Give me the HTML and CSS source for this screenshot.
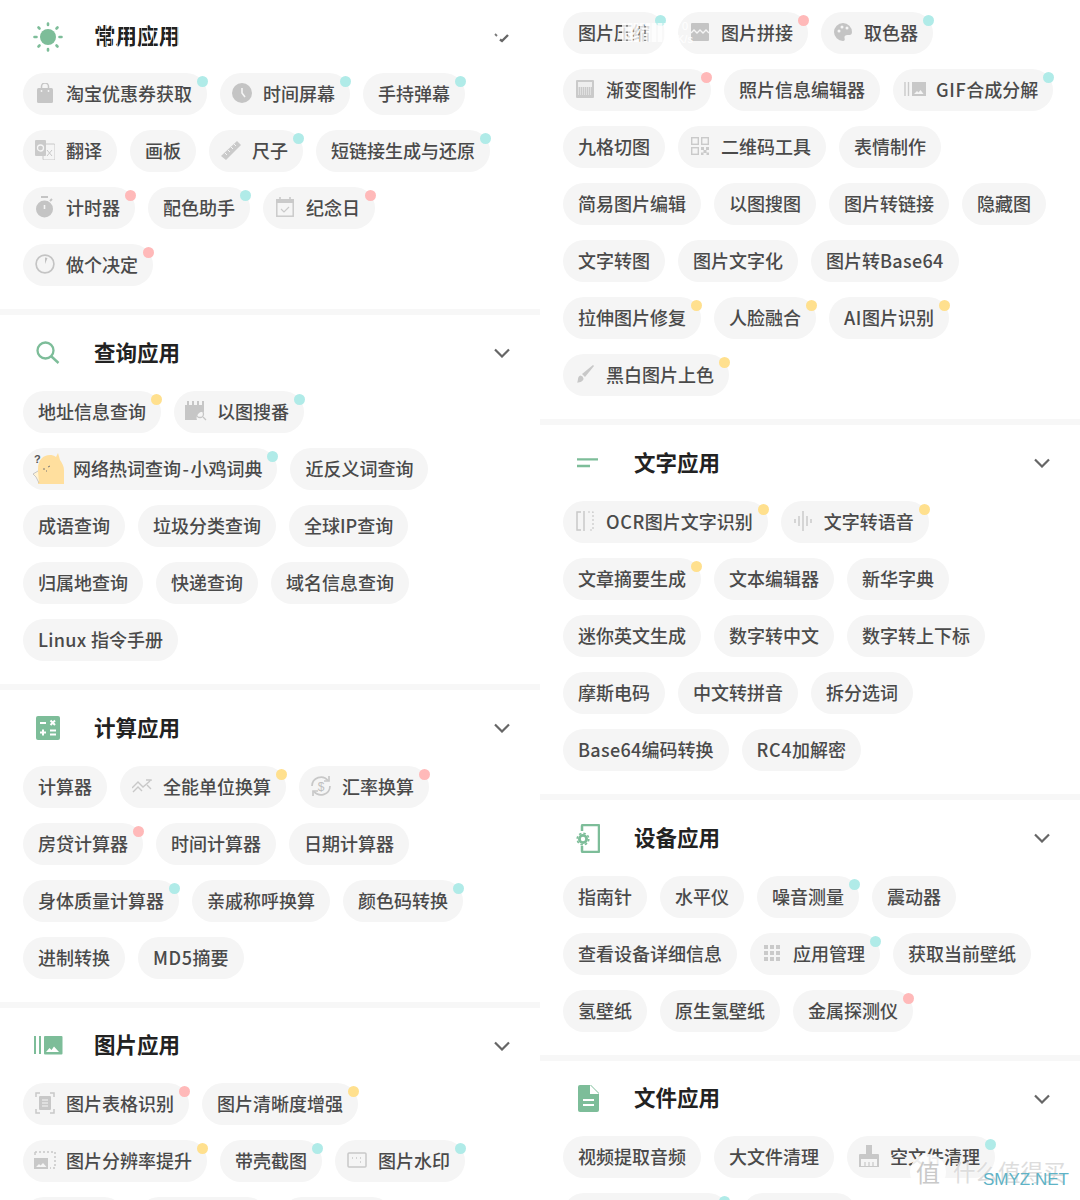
FILE: index.html
```html
<!DOCTYPE html>
<html lang="zh-CN">
<head>
    <meta charset="UTF-8">
    <meta name="viewport" content="width=device-width, initial-scale=1.0">
    <link rel="stylesheet" href="styles.css">
    <title>工具箱</title>
</head>
<body>
<div class="page">
    <!-- left column -->
    <div class="column">
        <section class="group group-first">
            <div class="group-head">
                <span class="head-icon">
                    <svg width="32" height="32" viewBox="0 0 32 32"><circle cx="16" cy="16" r="8" fill="#7dbd99"/><g stroke="#7dbd99" stroke-width="2.600" stroke-linecap="round"><path d="M16 2.500v1.500M16 28v1.500M2.500 16h2M27.500 16h2M6.500 6.500l1 1M24.500 24.500l1 1M25.500 6.500l-1 1M7.500 24.500l-1 1"/></g></svg>
                </span>
                <h2 class="head-title">常用应用</h2>
                <span class="head-noise"></span>
                <span class="head-arrow">
                    <svg width="16" height="12" viewBox="0 0 16 12"><path d="M1 3l2 2" fill="none" stroke="#777" stroke-width="1.800"/><path d="M6 8.500L8 10l6-6" fill="none" stroke="#666" stroke-width="2.400"/></svg>
                </span>
            </div>
            <div class="chips">
                <span class="chip has-icon"><span class="icon"><svg width="16" height="20" viewBox="0 0 16 20"><path d="M4.500 6V3.500a3.500 3.500 0 017 0V6" fill="none" stroke="#c6c6c6" stroke-width="1.500"/><rect x="0" y="5" width="16" height="15" rx="1.500" fill="#c6c6c6"/><circle cx="4.500" cy="8" r=".9" fill="#f5f5f5"/><circle cx="11.500" cy="8" r=".9" fill="#f5f5f5"/></svg></span>淘宝优惠券获取<i class="dot teal"></i></span>
                <span class="chip has-icon"><span class="icon"><svg width="20" height="20" viewBox="0 0 20 20"><circle cx="10" cy="10" r="10" fill="#c4c4c4"/><path d="M10 5v5l3 4" fill="none" stroke="#f5f5f5" stroke-width="1.600"/></svg></span>时间屏幕<i class="dot teal"></i></span>
                <span class="chip">手持弹幕<i class="dot teal"></i></span>
                <span class="chip has-icon"><span class="icon"><svg width="20" height="20" viewBox="0 0 20 20"><rect x="8" y="4" width="12" height="16" rx="1" fill="#f5f5f5" stroke="#c8c8c8"/><rect x="0" y="0" width="11" height="16" rx="1" fill="#cacaca"/><circle cx="5.500" cy="8" r="3" fill="none" stroke="#f5f5f5" stroke-width="1.300"/><path d="M12 10l5 6M17 10l-5 6" stroke="#c8c8c8"/></svg></span>翻译</span>
                <span class="chip">画板</span>
                <span class="chip has-icon"><span class="icon"><svg width="22" height="22" viewBox="0 0 22 22"><path d="M1 17L17 2l4 4L6 21z" fill="#cacaca"/><path d="M5 14l2 2M8 11l2 2M11 8l2 2M14 5l2 2" stroke="#f5f5f5" stroke-width="1"/></svg></span>尺子<i class="dot teal"></i></span>
                <span class="chip">短链接生成与还原<i class="dot teal"></i></span>
                <span class="chip has-icon"><span class="icon"><svg width="20" height="22" viewBox="0 0 20 22"><circle cx="9.500" cy="13" r="8.500" fill="#c4c4c4"/><rect x="6" y="0" width="7" height="2" fill="#c4c4c4"/><path d="M15 5l2-2" stroke="#c4c4c4" stroke-width="2"/><path d="M9.500 9v4" stroke="#f5f5f5" stroke-width="1.600"/></svg></span>计时器<i class="dot pink"></i></span>
                <span class="chip">配色助手<i class="dot teal"></i></span>
                <span class="chip has-icon"><span class="icon"><svg width="18" height="20" viewBox="0 0 18 20"><rect x=".8" y="2.800" width="16.400" height="16.400" fill="none" stroke="#cacaca" stroke-width="1.500"/><rect x="0" y="2" width="18" height="4" fill="#cacaca"/><path d="M4 0v3M14 0v3" stroke="#cacaca" stroke-width="1.600"/><path d="M5 12l3 3 5-5" fill="none" stroke="#cacaca" stroke-width="1.200"/></svg></span>纪念日<i class="dot pink"></i></span>
                <span class="chip has-icon"><span class="icon"><svg width="20" height="20" viewBox="0 0 20 20"><circle cx="10" cy="10" r="8.900" fill="none" stroke="#c4c4c4" stroke-width="1.700"/><path d="M10 3.500V10l2.500-6z" fill="#c0c0c0"/></svg></span>做个决定<i class="dot pink"></i></span>
            </div>
        </section>

        <section class="group">
            <div class="group-head">
                <span class="head-icon">
                    <svg width="26" height="26" viewBox="0 0 26 26"><circle cx="10.500" cy="10.500" r="8" fill="none" stroke="#7dbd99" stroke-width="2.300"/><path d="M16.500 16.500l7 6.500" stroke="#7dbd99" stroke-width="2.400"/></svg>
                </span>
                <h2 class="head-title">查询应用</h2>
                <span class="head-arrow"><svg width="16" height="10" viewBox="0 0 16 10"><path d="M1 1.500l7 7 7-7" fill="none" stroke="#666" stroke-width="2.200"/></svg></span>
            </div>
            <div class="chips">
                <span class="chip">地址信息查询<i class="dot yellow"></i></span>
                <span class="chip has-icon"><span class="icon"><svg width="22" height="20" viewBox="0 0 22 20"><path d="M0 4h19v7a6 6 0 00-7 8H0z" fill="#c6c6c6"/><path d="M3 0v4M8 0v4M13 0v4M18 0v4" stroke="#c6c6c6" stroke-width="2"/><circle cx="15" cy="13" r="3.500" fill="none" stroke="#c6c6c6" stroke-width="1.300"/><path d="M18 16l3 3" stroke="#c6c6c6" stroke-width="1.300"/></svg></span>以图搜番<i class="dot teal"></i></span>
                <span class="chip has-icon has-pic"><span class="icon"><svg width="31" height="32" viewBox="0 0 31 32"><path d="M5 32V17C5 8 10 3 17 3c2 0 4 .5 6 2l2-4 2 7c2 3 4 6 4 10v14z" fill="#ffdf9e"/><path d="M5 19L0 22l3 3 3 6" fill="#fff3d6" stroke="#bbb" stroke-width=".8"/><path d="M10 17h2M15 15l2-1M13 19h1" stroke="#777" stroke-width="1"/><text x="1" y="11" class="pic-mark">?</text></svg></span>网络热词查询<span class="wide-dash">-</span>小鸡词典<i class="dot teal"></i></span>
                <span class="chip">近反义词查询</span>
                <span class="chip">成语查询</span>
                <span class="chip">垃圾分类查询</span>
                <span class="chip">全球IP查询</span>
                <span class="chip">归属地查询</span>
                <span class="chip">快递查询</span>
                <span class="chip">域名信息查询</span>
                <span class="chip"><span class="latin-long">Linux&nbsp;</span>指令手册</span>
            </div>
        </section>

        <section class="group">
            <div class="group-head">
                <span class="head-icon">
                    <svg width="24" height="24" viewBox="0 0 24 24"><rect width="24" height="24" rx="2" fill="#7dbd99"/><g stroke="#fff" stroke-width="2"><path d="M4 7h6M14.500 4.500l4.500 4.500M19 4.500L14.500 9M4 16.500h6M7 13.500v6M14 14.500h6M14 18.500h6"/></g></svg>
                </span>
                <h2 class="head-title">计算应用</h2>
                <span class="head-arrow"><svg width="16" height="10" viewBox="0 0 16 10"><path d="M1 1.500l7 7 7-7" fill="none" stroke="#666" stroke-width="2.200"/></svg></span>
            </div>
            <div class="chips">
                <span class="chip">计算器</span>
                <span class="chip has-icon"><span class="icon"><svg width="20" height="14" viewBox="0 0 20 14"><path d="M0 9l6-6 5 5 7-6M14 1h5v1M1 13l5-5 4 4M15 6l4 4" fill="none" stroke="#c8c8c8" stroke-width="1.400"/></svg></span>全能单位换算<i class="dot yellow"></i></span>
                <span class="chip has-icon"><span class="icon"><svg width="22" height="22" viewBox="0 0 22 22"><path d="M2 11a9 9 0 0116-5.500M20 11a9 9 0 01-16 5.500" fill="none" stroke="#c8c8c8" stroke-width="1.700"/><path d="M19 1v5h-5M3 21v-5h5" fill="none" stroke="#c8c8c8" stroke-width="1.700"/><text x="11" y="15.500" class="pic-money">$</text></svg></span>汇率换算<i class="dot pink"></i></span>
                <span class="chip">房贷计算器<i class="dot pink"></i></span>
                <span class="chip">时间计算器</span>
                <span class="chip">日期计算器</span>
                <span class="chip">身体质量计算器<i class="dot teal"></i></span>
                <span class="chip">亲戚称呼换算</span>
                <span class="chip">颜色码转换<i class="dot teal"></i></span>
                <span class="chip">进制转换</span>
                <span class="chip"><span class="latin">MD5</span>摘要</span>
            </div>
        </section>

        <section class="group">
            <div class="group-head">
                <span class="head-icon">
                    <svg width="29" height="19" viewBox="0 0 29 19"><path d="M1 0v18M6 0v18" stroke="#7dbd99" stroke-width="2"/><rect x="10" y="0" width="18.500" height="18.500" rx="1" fill="#7dbd99"/><path d="M12 16l3.500-4 2 2 2.500-3.500 5 5.500z" fill="#fff"/></svg>
                </span>
                <h2 class="head-title">图片应用</h2>
                <span class="head-arrow"><svg width="16" height="10" viewBox="0 0 16 10"><path d="M1 1.500l7 7 7-7" fill="none" stroke="#666" stroke-width="2.200"/></svg></span>
            </div>
            <div class="chips">
                <span class="chip has-icon"><span class="icon"><svg width="20" height="22" viewBox="0 0 20 22"><path d="M1 5V1h4M15 1h4v4M19 17v4h-4M5 21H1v-4" fill="none" stroke="#c8c8c8" stroke-width="1.500"/><rect x="4" y="4" width="12" height="14" rx="1" fill="#c8c8c8"/><path d="M7 8h6M7 11h6M7 14h6" stroke="#f5f5f5" stroke-width="1.200"/></svg></span>图片表格识别<i class="dot pink"></i></span>
                <span class="chip">图片清晰度增强<i class="dot yellow"></i></span>
                <span class="chip has-icon"><span class="icon"><svg width="22" height="18" viewBox="0 0 22 18"><path d="M1 1h20v16h-5" fill="none" stroke="#c8c8c8" stroke-width="1.500" stroke-dasharray="2 2"/><path d="M1 1v3" stroke="#c8c8c8" stroke-width="1.500"/><path d="M0 7h14v11H0z" fill="#c8c8c8"/><path d="M2 16l3-3 1.500 1.500L9 12l3.500 4z" fill="#f5f5f5"/></svg></span>图片分辨率提升<i class="dot yellow"></i></span>
                <span class="chip">带壳截图<i class="dot teal"></i></span>
                <span class="chip has-icon"><span class="icon"><svg width="20" height="16" viewBox="0 0 20 16"><rect x="1" y="1" width="18" height="14" rx="1" fill="none" stroke="#c8c8c8" stroke-width="1.500"/><path d="M5 6h1M9 6h1M13 6h1M13 10h1" stroke="#c8c8c8" stroke-width="1.500"/></svg></span>图片水印<i class="dot teal"></i></span>
                <!-- next row is cut by the picture edge, only the pill tops show -->
                <span class="chip cut-a"><i class="dot teal"></i></span>
                <span class="chip cut-b"><i class="dot pink"></i></span>
                <span class="chip cut-c"><i class="dot teal"></i></span>
            </div>
        </section>
    </div>

    <!-- right column -->
    <div class="column column-right">
        <section class="group group-cont">
            <div class="chips">
                <span class="chip">图片压缩<i class="dot teal"></i></span>
                <span class="chip has-icon"><span class="icon"><svg width="18" height="18" viewBox="0 0 18 18"><rect width="18" height="18" rx="1" fill="#c4c4c4"/><path d="M0 10l3-3 3 3 3-3 3 3 3-3 3 3" fill="none" stroke="#f5f5f5" stroke-width="1.400"/></svg></span>图片拼接<i class="dot pink"></i></span>
                <span class="chip has-icon"><span class="icon"><svg width="18" height="18" viewBox="0 0 18 18"><path d="M9 0a9 9 0 100 18c2 0 2-1.500 1.500-3-.5-2 1-3 3-3h2c1.500 0 2.500-1 2.500-3a9 9 0 00-9-9z" fill="#c4c4c4"/><circle cx="5" cy="8" r="1.500" fill="#f5f5f5"/><circle cx="8" cy="4" r="1.500" fill="#f5f5f5"/><circle cx="13" cy="5" r="1.500" fill="#f5f5f5"/></svg></span>取色器<i class="dot teal"></i></span>
                <span class="chip has-icon"><span class="icon"><svg width="18" height="18" viewBox="0 0 18 18"><rect width="18" height="18" rx="1" fill="#cacaca"/><rect x="2" y="2" width="14" height="5" fill="#eee"/><path d="M2 8h14M2 10h14M2 12h14M2 14h14" stroke="#f5f5f5" stroke-width="1" stroke-dasharray="1 1"/></svg></span>渐变图制作<i class="dot pink"></i></span>
                <span class="chip">照片信息编辑器</span>
                <span class="chip has-icon"><span class="icon"><svg width="22" height="14" viewBox="0 0 22 14"><path d="M1 0v14M4.500 0v14" stroke="#cacaca" stroke-width="1.400"/><rect x="8" y="0" width="14" height="14" fill="#c8c8c8"/><path d="M10 12l3-3 1.500 1.500 2-2.500 3 4z" fill="#f5f5f5"/></svg></span><span class="latin">GIF</span>合成分解<i class="dot teal"></i></span>
                <span class="chip">九格切图</span>
                <span class="chip has-icon"><span class="icon"><svg width="18" height="18" viewBox="0 0 18 18"><g fill="none" stroke="#cacaca" stroke-width="1.400"><rect x=".7" y=".7" width="6.600" height="6.600"/><rect x="10.700" y=".7" width="6.600" height="6.600"/><rect x=".7" y="10.700" width="6.600" height="6.600"/></g><path d="M10 10h3v3h-3zM15 10h3v3h-3zM12.500 13h3v3h-3zM10 15.500h2.500V18H10zM15.500 15.500H18V18h-2.500z" fill="#cacaca"/></svg></span>二维码工具</span>
                <span class="chip">表情制作</span>
                <span class="chip">简易图片编辑</span>
                <span class="chip">以图搜图</span>
                <span class="chip">图片转链接</span>
                <span class="chip">隐藏图</span>
                <span class="chip">文字转图</span>
                <span class="chip">图片文字化</span>
                <span class="chip">图片转<span class="latin-long">Base64</span></span>
                <span class="chip">拉伸图片修复<i class="dot yellow"></i></span>
                <span class="chip">人脸融合<i class="dot yellow"></i></span>
                <span class="chip"><span class="latin">AI</span>图片识别<i class="dot yellow"></i></span>
                <span class="chip has-icon"><span class="icon"><svg width="18" height="18" viewBox="0 0 18 18"><path d="M17 0l1 1L9 12l-3-3z" fill="#c8c8c8"/><path d="M4.500 10.500a3.500 3.500 0 013 3c0 2.500-3 4-6.500 4 1.500-1.500 0-6 3.500-7z" fill="#c8c8c8"/></svg></span>黑白图片上色<i class="dot yellow"></i></span>
            </div>
        </section>

        <section class="group">
            <div class="group-head">
                <span class="head-icon">
                    <svg width="22" height="10" viewBox="0 0 22 10"><path d="M0 1.300h21M0 8h13" stroke="#7dbd99" stroke-width="2.300"/></svg>
                </span>
                <h2 class="head-title">文字应用</h2>
                <span class="head-arrow"><svg width="16" height="10" viewBox="0 0 16 10"><path d="M1 1.500l7 7 7-7" fill="none" stroke="#666" stroke-width="2.200"/></svg></span>
            </div>
            <div class="chips">
                <span class="chip has-icon"><span class="icon"><svg width="18" height="20" viewBox="0 0 18 20"><path d="M5 1H1v18h4" fill="none" stroke="#c8c8c8" stroke-width="1.500"/><path d="M8 0v20" stroke="#c8c8c8" stroke-width="1.500"/><path d="M12 1h5v18h-5" fill="none" stroke="#c8c8c8" stroke-width="1.200" stroke-dasharray="2 2"/></svg></span><span class="latin">OCR</span>图片文字识别<i class="dot yellow"></i></span>
                <span class="chip has-icon"><span class="icon"><svg width="18" height="20" viewBox="0 0 18 20"><path d="M1 8v4M5 5v10M9 0v20M13 5v10M17 8v4" stroke="#c8c8c8" stroke-width="1.400"/></svg></span>文字转语音<i class="dot yellow"></i></span>
                <span class="chip">文章摘要生成<i class="dot yellow"></i></span>
                <span class="chip">文本编辑器</span>
                <span class="chip">新华字典</span>
                <span class="chip">迷你英文生成</span>
                <span class="chip">数字转中文</span>
                <span class="chip">数字转上下标</span>
                <span class="chip">摩斯电码</span>
                <span class="chip">中文转拼音</span>
                <span class="chip">拆分选词</span>
                <span class="chip"><span class="latin-long">Base64</span>编码转换</span>
                <span class="chip"><span class="latin">RC4</span>加解密</span>
            </div>
        </section>

        <section class="group">
            <div class="group-head">
                <span class="head-icon">
                    <svg width="24" height="29" viewBox="0 0 24 29"><path d="M6 7V2a1 1 0 011-1h15a1 1 0 011 1v25a1 1 0 01-1 1H7a1 1 0 01-1-1v-5" fill="none" stroke="#7dbd99" stroke-width="2.500"/><circle cx="7" cy="15" r="3.600" fill="none" stroke="#7dbd99" stroke-width="2.800"/><circle cx="7" cy="15" r="5.800" fill="none" stroke="#7dbd99" stroke-width="1.600" stroke-dasharray="2.500 2"/></svg>
                </span>
                <h2 class="head-title">设备应用</h2>
                <span class="head-arrow"><svg width="16" height="10" viewBox="0 0 16 10"><path d="M1 1.500l7 7 7-7" fill="none" stroke="#666" stroke-width="2.200"/></svg></span>
            </div>
            <div class="chips">
                <span class="chip">指南针</span>
                <span class="chip">水平仪</span>
                <span class="chip">噪音测量<i class="dot teal"></i></span>
                <span class="chip">震动器</span>
                <span class="chip">查看设备详细信息</span>
                <span class="chip has-icon"><span class="icon"><svg width="16" height="16" viewBox="0 0 16 16"><path d="M0 0h4v4H0zM6 0h4v4H6zM12 0h4v4h-4zM0 6h4v4H0zM6 6h4v4H6zM12 6h4v4h-4zM0 12h4v4H0zM6 12h4v4H6zM12 12h4v4h-4z" fill="#cacaca"/></svg></span>应用管理<i class="dot teal"></i></span>
                <span class="chip">获取当前壁纸</span>
                <span class="chip">氢壁纸</span>
                <span class="chip">原生氢壁纸</span>
                <span class="chip">金属探测仪<i class="dot pink"></i></span>
            </div>
        </section>

        <section class="group">
            <div class="group-head">
                <span class="head-icon">
                    <svg width="21" height="27" viewBox="0 0 21 27"><path d="M2 0h11l8 8v17a2 2 0 01-2 2H2a2 2 0 01-2-2V2a2 2 0 012-2z" fill="#7dbd99"/><path d="M12 0v9h9z" fill="#fff"/><path d="M5 15h11M5 20h11" stroke="#fff" stroke-width="2.200"/></svg>
                </span>
                <h2 class="head-title">文件应用</h2>
                <span class="head-arrow"><svg width="16" height="10" viewBox="0 0 16 10"><path d="M1 1.500l7 7 7-7" fill="none" stroke="#666" stroke-width="2.200"/></svg></span>
            </div>
            <div class="chips">
                <span class="chip">视频提取音频</span>
                <span class="chip">大文件清理</span>
                <span class="chip has-icon"><span class="icon"><svg width="20" height="22" viewBox="0 0 20 22"><path d="M7 0h6v9h6a1 1 0 011 1v12H0V10a1 1 0 011-1h6z" fill="#c8c8c8"/><rect x="2" y="14" width="16" height="7" fill="#f5f5f5"/><path d="M6 21v-4M10 21v-4M14 21v-4" stroke="#c8c8c8" stroke-width="1.200"/></svg></span>空文件清理<i class="dot teal"></i></span>
                <span class="chip cut-d"><i class="dot teal"></i></span>
                <span class="chip cut-e"></span>
            </div>
        </section>
    </div>

    <!-- leftovers of the capture sitting on top of the page -->
    <div class="smudge"></div>
    <div class="netspeed">0<br>K/s</div>
    <div class="mark">
        <span class="mark-badge">值</span>
        <span class="mark-name">什么值得买</span>
        <span class="mark-site">SMYZ.NET</span>
    </div>
</div>
</body>
</html>
```

FILE: styles.css
```css
body {
    margin: 0;
    background-color: #fff;
    font-family: "Noto Sans CJK SC", "Noto Sans", sans-serif;
}

.page {
    position: relative;
    display: flex;
    width: 1080px;
    height: 1200px;
    overflow: hidden;
}

.column {
    width: 540px;
    flex-shrink: 0;
}

.group {
    padding-bottom: 23px;
    border-bottom: 6px solid #f7f7f7;
}

.group:last-child {
    border-bottom: none;
}

.group-first .group-head {
    height: 73px;
}

.group:last-child .group-head {
    height: 75px;
}

.group-cont {
    padding-top: 12px;
}

.group-head {
    position: relative;
    display: flex;
    align-items: center;
    height: 76px;
    padding-left: 28px;
    padding-right: 30px;
}

.head-icon {
    display: flex;
    align-items: center;
    justify-content: center;
    width: 40px;
    margin-right: 26px;
}

.head-title {
    flex: 1;
    margin: 0;
    padding-bottom: 4px;
    font-size: 21.500px;
    font-weight: 700;
    color: #222;
}

.head-noise {
    position: absolute;
    left: 94px;
    top: 22px;
    width: 85px;
    height: 24px;
    background: repeating-linear-gradient(90deg, transparent 0 5px, rgba(255, 255, 255, 0.55) 5px 6px);
}

.head-arrow {
    display: flex;
    width: 16px;
}

.chips {
    display: flex;
    flex-wrap: wrap;
    gap: 15px 13px;
    padding: 0 25px 0 23px;
}

.chip {
    position: relative;
    box-sizing: border-box;
    display: inline-flex;
    align-items: center;
    height: 42px;
    padding: 0 15px 2px;
    border-radius: 21px;
    background-color: #f5f5f5;
    font-size: 18px;
    font-weight: 500;
    color: #4a4a4a;
    white-space: nowrap;
}

.has-icon {
    padding-left: 10px;
}

.icon {
    display: flex;
    align-items: center;
    justify-content: center;
    width: 24px;
    height: 32px;
    margin-right: 9px;
}

.has-pic .icon {
    width: 31px;
}

.latin {
    letter-spacing: 0.6px;
}

.latin-long {
    letter-spacing: 0.3px;
}

.wide-dash {
    margin: 0 1.500px;
}

/* pills cut by the bottom edge */
.cut-a {
    width: 102px;
}

.cut-b {
    width: 130px;
}

.cut-c {
    width: 112px;
}

.cut-d {
    width: 166px;
}

.cut-e {
    width: 115px;
}

.dot {
    position: absolute;
    top: 3px;
    right: -1px;
    width: 11px;
    height: 11px;
    border-radius: 50%;
}

.teal {
    background-color: #b0ebe8;
}

.pink {
    background-color: #ffb9b9;
}

.yellow {
    background-color: #ffe08e;
}

.pic-mark {
    font-family: "Liberation Sans", sans-serif;
    font-size: 11px;
    font-weight: 700;
    fill: #555;
}

.pic-money {
    font-family: "Liberation Sans", sans-serif;
    font-size: 12px;
    text-anchor: middle;
    fill: #c0c0c0;
}

/* capture leftovers */
.smudge {
    position: absolute;
    left: 622px;
    top: 23px;
    width: 44px;
    height: 19px;
    background: repeating-linear-gradient(90deg, rgba(255, 255, 255, 0.8) 0 4px, rgba(255, 255, 255, 0.35) 4px 6px);
}

.netspeed {
    position: absolute;
    left: 677px;
    top: 20px;
    font-family: "Liberation Sans", sans-serif;
    font-size: 11px;
    line-height: 13px;
    color: #fff;
    text-align: center;
}

.mark {
    position: absolute;
    left: 910px;
    top: 1152px;
    width: 170px;
    height: 48px;
}

.mark-badge {
    position: absolute;
    left: 0;
    top: 2px;
    width: 36px;
    height: 36px;
    border-radius: 50%;
    background-color: rgba(255, 255, 255, 0.9);
    font-size: 24px;
    line-height: 36px;
    color: #c9c9c9;
    text-align: center;
}

.mark-name {
    position: absolute;
    left: 43px;
    top: 2px;
    font-size: 22.500px;
    line-height: 34px;
    color: #ddd;
    text-shadow: 0 0 2px #fff;
    white-space: nowrap;
}

.mark-site {
    position: absolute;
    left: 73px;
    top: 17px;
    font-family: "Liberation Sans", sans-serif;
    font-size: 17px;
    line-height: 22px;
    color: #5fb3c6;
    white-space: nowrap;
}
```
